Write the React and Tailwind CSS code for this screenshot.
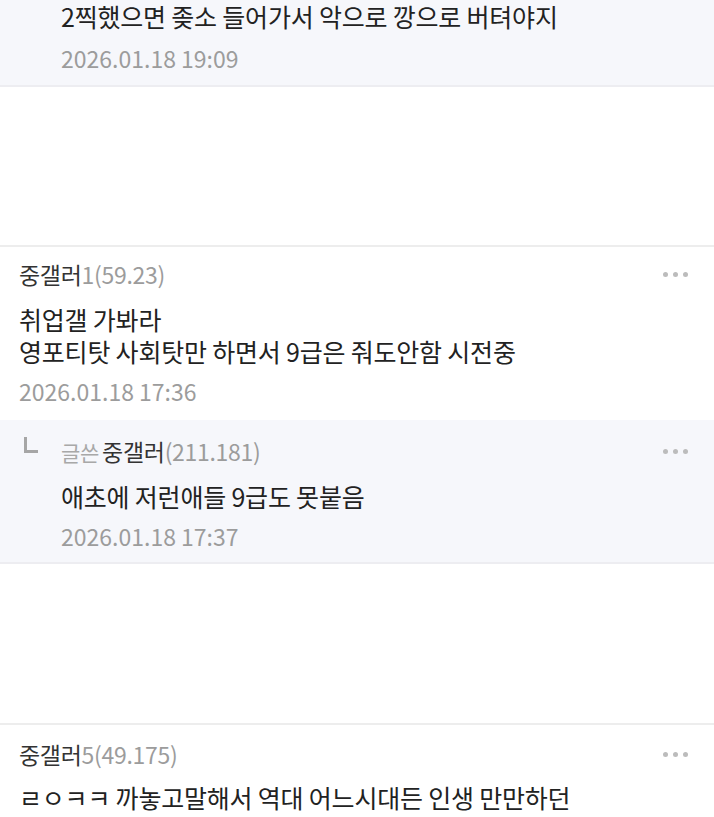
import React from "react";

function Dots() {
  return (
    <div className="flex items-center gap-[5px] mt-[14px]">
      <span className="w-[5px] h-[5px] rounded-full bg-[#bcbcbc]" />
      <span className="w-[5px] h-[5px] rounded-full bg-[#bcbcbc]" />
      <span className="w-[5px] h-[5px] rounded-full bg-[#bcbcbc]" />
    </div>
  );
}

export default function App() {
  return (
    <div className="w-[714px] h-[817px] overflow-hidden bg-white font-['Noto_Sans_CJK_KR','Noto_Sans',sans-serif] text-[#222]">
      {/* top reply continuation */}
      <div className="bg-[#f6f7fb] border-b-2 border-[#ededf1] pl-[61px] pb-[11px]">
        <div className="text-[25px] leading-[32px] tracking-[-0.2px]">2찍했으면 좆소 들어가서 악으로 깡으로 버텨야지</div>
        <div className="mt-[10px] text-[23px] leading-[32px] text-[#9c9c9c]">2026.01.18 19:09</div>
      </div>

      <div className="h-[158px]" />

      {/* comment 1 */}
      <div className="border-t-2 border-[#ededed] pl-[19px] pr-[26px] pt-[11px] pb-[13px]">
        <div className="flex items-start justify-between">
          <div className="text-[23px] leading-[32px] tracking-[-0.3px]">
            <span className="text-[#333]">중갤러</span>
            <span className="text-[#9c9c9c]">1(59.23)</span>
          </div>
          <Dots />
        </div>
        <div className="mt-[13px] text-[25px] leading-[32px] tracking-[-0.2px]">
          <div>취업갤 가봐라</div>
          <div>영포티탓 사회탓만 하면서 9급은 줘도안함 시전중</div>
        </div>
        <div className="mt-[8px] text-[23px] leading-[32px] text-[#9c9c9c]">2026.01.18 17:36</div>
      </div>

      {/* reply */}
      <div className="bg-[#f6f7fb] border-b-2 border-[#ededf1] pt-[15px] pb-[10px] pr-[26px] flex">
        <div className="w-[61px] shrink-0 pl-[24px] pt-[2px]">
          <div className="w-[14px] h-[16px] border-l-[3px] border-b-[3px] border-[#a6a6a6]" />
        </div>
        <div className="flex-1">
          <div className="flex items-start justify-between">
            <div className="text-[23px] leading-[32px] tracking-[-0.3px]">
              <span className="text-[#a8a8a8] text-[21px]">글쓴</span>
              <span className="text-[#333] ml-[3px]">중갤러</span>
              <span className="text-[#9c9c9c]">(211.181)</span>
            </div>
            <Dots />
          </div>
          <div className="mt-[12px] text-[25px] leading-[32px] tracking-[-0.2px]">애초에 저런애들 9급도 못붙음</div>
          <div className="mt-[8px] text-[23px] leading-[32px] text-[#9c9c9c]">2026.01.18 17:37</div>
        </div>
      </div>

      <div className="h-[159px]" />

      {/* comment 3 */}
      <div className="border-t-2 border-[#ededed] pl-[19px] pr-[26px] pt-[13px]">
        <div className="flex items-start justify-between">
          <div className="text-[23px] leading-[32px] tracking-[-0.3px]">
            <span className="text-[#333]">중갤러</span>
            <span className="text-[#9c9c9c]">5(49.175)</span>
          </div>
          <Dots />
        </div>
        <div className="mt-[11px] text-[25px] leading-[32px] tracking-[-0.2px]">ㄹㅇㅋㅋ 까놓고말해서 역대 어느시대든 인생 만만하던</div>
      </div>
    </div>
  );
}
